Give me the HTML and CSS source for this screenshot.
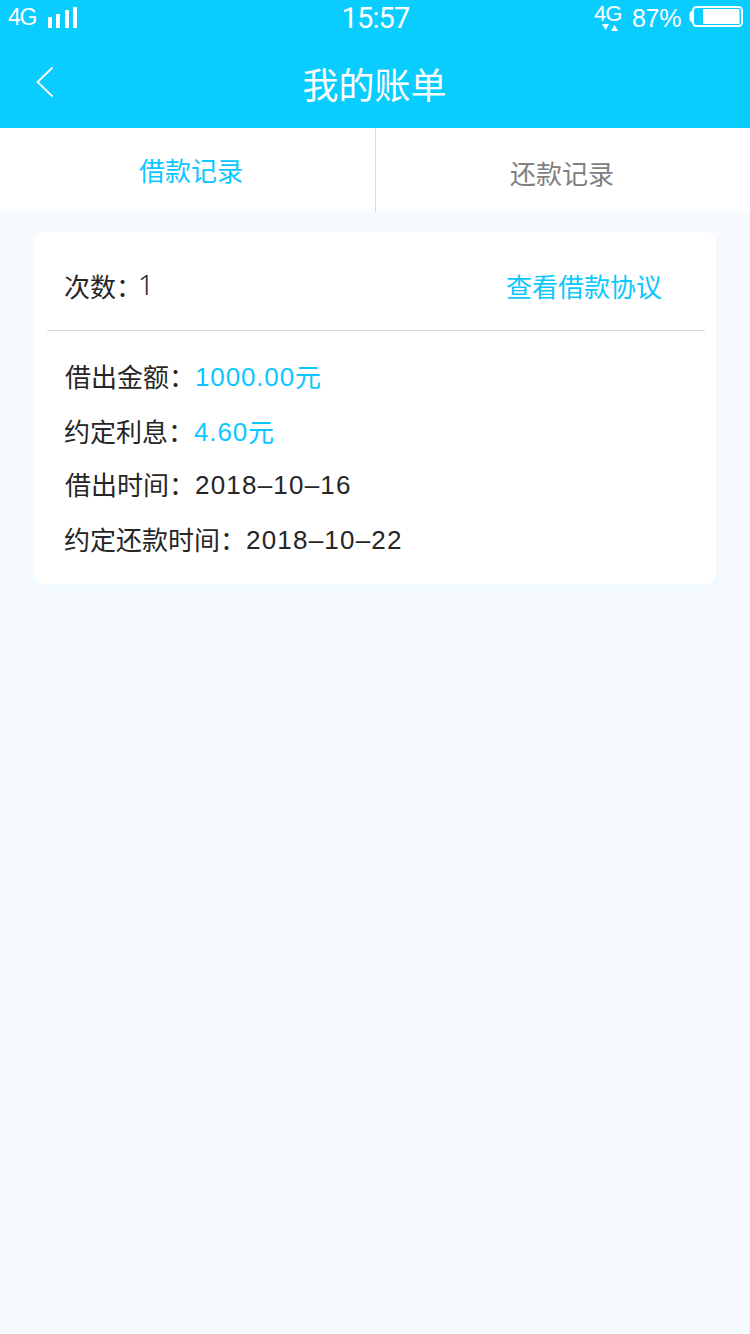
FILE: index.html
```html
<!DOCTYPE html>
<html lang="zh-CN">
<head>
<meta charset="utf-8">
<title>我的账单</title>
<link rel="stylesheet" href="styles.css">
</head>
<body>
<header class="header">
  <div class="status">
    <div class="status-left">
      <span class="network">4G</span>
      <svg class="signal" width="30" height="21" viewBox="0 0 30 21"><path fill="#fff" d="M0 10h4v11H0zM8 7h4v14H8zM17 3h4v18h-4zM25 0h4v21h-4z"/></svg>
    </div>
    <time class="clock">15:57</time>
    <div class="status-right">
      <div class="data">
        <span class="data-label">4G</span>
        <svg class="data-arrows" width="16" height="7" viewBox="0 0 16 7"><path fill="#fff" d="M0 0h7L3.5 6zM9 7h7L12.500 1z"/></svg>
      </div>
      <span class="percent">87%</span>
      <svg class="battery" width="54" height="21" viewBox="0 0 54 21"><rect x="4" y="1" width="49" height="19" rx="3.500" fill="none" stroke="#fff" stroke-width="2"/><path fill="#fff" d="M4 5H2.500Q0.500 5.500 0.500 8v5q0 2.500 2 3H4zM14 3h36.500v15H14z"/></svg>
    </div>
  </div>
  <nav class="titlebar">
    <svg class="back" width="20" height="32" viewBox="0 0 20 32"><path fill="none" stroke="#fff" stroke-width="1.800" d="M17.500 1.500L2.500 16l15 14.500"/></svg>
    <h1 class="title">我的账单</h1>
  </nav>
</header>
<div class="tabs">
  <div class="tab tab-active">借款记录</div>
  <div class="tab tab-idle">还款记录</div>
</div>
<main class="card">
  <div class="card-head">
    <div class="count"><span>次数<span class="colon">：</span></span><span class="count-number">1</span></div>
    <a class="agreement">查看借款协议</a>
  </div>
  <div class="details">
    <div class="row row-amount"><span class="label">借出金额：</span><span class="value accent">1000.00</span><span class="unit accent">元</span></div>
    <div class="row row-interest"><span class="label">约定利息：</span><span class="value accent">4.60</span><span class="unit accent">元</span></div>
    <div class="row row-lent"><span class="label">借出时间：</span><span class="value date">2018–10–16</span></div>
    <div class="row row-due"><span class="label">约定还款时间：</span><span class="value date">2018–10–22</span></div>
  </div>
</main>
</body>
</html>
```
FILE: styles.css
```css
* { box-sizing: border-box; }

body {
  margin: 0;
  min-height: 1334px;
  background: #f5fbff;
  color: #262626;
  font-family: "Liberation Sans", "Noto Sans CJK SC", sans-serif;
  font-size: 26px;
}

svg { display: block; flex: none; }

.header {
  height: 128px;
  background: #0acdff;
  color: #fff;
}

.status {
  display: grid;
  grid-template-columns: 1fr auto 1fr;
  height: 36px;
  padding: 0 7px 0 8px;
}

.status-left { display: flex; align-items: flex-start; }
.network {
  width: 40px;
  padding-top: 4px;
  font-size: 23px;
  line-height: 26px;
  letter-spacing: -1.2px;
}
.signal { margin-top: 7px; }

.clock {
  padding-top: 2px;
  font-family: Roboto, sans-serif;
  font-size: 29px;
  line-height: 32px;
  letter-spacing: -0.8px;
}

.status-right { display: flex; justify-content: flex-end; align-items: flex-start; }
.data { width: 38px; padding-top: 3px; }
.data-label {
  display: block;
  font-size: 22px;
  line-height: 21px;
  letter-spacing: -1px;
}
.data-arrows { margin-left: 8px; }
.percent {
  width: 57px;
  padding-top: 3px;
  font-size: 25px;
  line-height: 30px;
  letter-spacing: -0.3px;
}
.battery { margin-top: 6px; }

.titlebar {
  display: grid;
  grid-template-columns: 55px 1fr 56px;
  align-items: start;
}
.back { justify-self: end; margin-top: 30px; }
.title {
  margin: 31px 0 0;
  font-size: 36px;
  line-height: 40px;
  font-weight: 400;
  text-align: center;
}

.tabs {
  display: grid;
  grid-template-columns: 376px 1fr;
  height: 83px;
  background: #fff;
  line-height: 36px;
}
.tab-active {
  height: 84px;
  padding: 26px 0 0 139px;
  border-right: 1px solid #d9d9d9;
  color: #0ac8ff;
}
.tab-idle { padding: 29px 0 0 134px; color: #808080; }

.card {
  height: 352px;
  margin: 21px 34px 0;
  border-radius: 9px;
  background: #fff;
  box-shadow: 0 3px 10px rgba(10, 150, 255, 0.03);
}

.card-head {
  display: flex;
  justify-content: space-between;
  height: 99px;
  margin: 0 11px 0 13px;
  padding: 38px 43px 0 17px;
  border-bottom: 1px solid #d9d9d9;
  line-height: 36px;
}
.count { display: flex; }
.colon { letter-spacing: -5px; }
.count-number {
  margin-top: -4px;
  padding-left: 1px;
  font-family: "Noto Sans", sans-serif;
  font-size: 28px;
  font-weight: 300;
}
.agreement, .accent { color: #0ac8ff; }

.details { padding: 28px 0 0 30px; }
.row { display: flex; height: 36px; line-height: 36px; }
.row-amount, .row-lent { padding-left: 1px; }
.row-interest { margin-top: 19px; }
.row-lent { margin-top: 17px; }
.row-due { margin-top: 19px; }
.label, .unit { padding-top: 1px; }
.value { letter-spacing: 0.85px; }
.date { letter-spacing: 1.2px; }
```
